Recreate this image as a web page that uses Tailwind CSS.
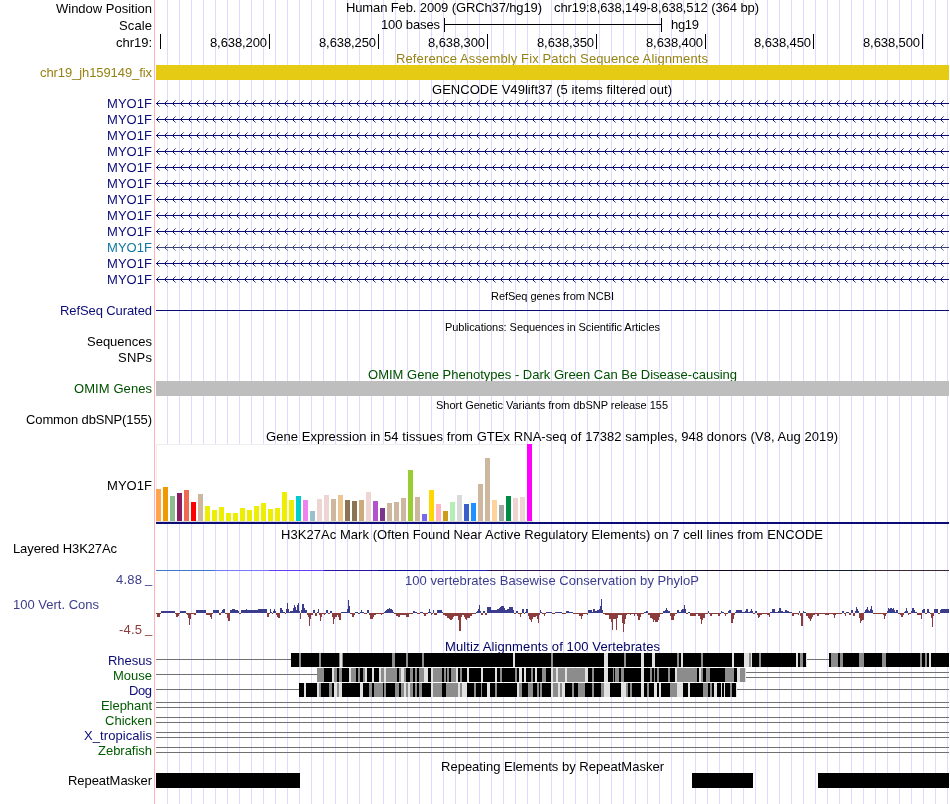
<!DOCTYPE html>
<html lang="en">
<head>
<meta charset="utf-8">
<title>Genome Browser chr19:8,638,149-8,638,512</title>
<script src="https://cdn.jsdelivr.net/npm/@tailwindcss/browser@4"></script>
</head>
<body class="bg-white">
<main class="relative w-[950px] h-[804px] overflow-hidden bg-white font-['Liberation_Sans',Arial,sans-serif]">
  <svg id="guides" class="absolute inset-0" width="950" height="804" shape-rendering="crispEdges" aria-hidden="true"></svg>
  <div id="tracks" class="relative flex flex-col will-change-transform antialiased"></div>
</main>
<script>
const NAVY = '#0c0c78', GREEN = '#005a00', CONS = '#3c3c8c', NEG = '#8c3c3c', LINE = '#707070';
const rect = (x, y, w, h, c) => `<rect x="${x}" y="${y}" width="${w}" height="${h}" fill="${c}"/>`;
// Text from x1 to x2 on baseline y
const text = (x1, x2, y, s, c = '#000', size = 13) =>
  `<text x="${x1}" y="${y}" textLength="${x2 - x1}" fill="${c}" font-size="${size}" xml:space="preserve">${s}</text>`;

let top_ = 0;
const out = [];
// A track row: the label cell and the data cell share page coordinates
function row(h, label, data) {
  out.push(`<section class="flex">
    <svg class="shrink-0 overflow-visible" width="155" height="${h}" viewBox="0 ${top_} 155 ${h}">${label}</svg>
    <svg class="shrink-0 overflow-visible" width="795" height="${h}" viewBox="155 ${top_} 795 ${h}">${data}</svg>
  </section>`);
  top_ += h;
}
const crisp = s => `<g shape-rendering="crispEdges">${s}</g>`;

// Guides
let g = rect(154, 0, 1, 804, '#ffb4b4');
for (let x = 167; x < 949; x += 12) g += rect(x, 0, 1, 804, '#dcdcff');
document.getElementById('guides').innerHTML = g;

// Header
row(17, text(56, 152, 13, 'Window Position'),
  text(346, 542, 12, 'Human Feb. 2009 (GRCh37/hg19)') + text(554, 759, 12, 'chr19:8,638,149-8,638,512 (364 bp)'));
row(16, text(119, 152, 30, 'Scale'),
  text(381, 440, 29, '100 bases') + crisp(rect(444, 24, 218, 1, '#000') + rect(444, 18, 1, 14, '#000') + rect(661, 18, 1, 14, '#000')) + text(671, 699, 29, 'hg19'));
const ticks = [[269, '200'], [378, '250'], [487, '300'], [596, '350'], [705, '400'], [813, '450'], [922, '500']];
row(18, text(116, 152, 47, 'chr19:'),
  crisp(rect(160, 34, 1, 15, '#000') + ticks.map(t => rect(t[0], 34, 1, 15, '#000')).join('')) +
  ticks.map(t => text(t[0] - 59, t[0] - 2, 47, '8,638,' + t[1])).join(''));

// Fix patch
row(14, '', text(396, 708, 63, 'Reference Assembly Fix Patch Sequence Alignments', '#968214'));
row(15, text(40, 152, 77, 'chr19_jh159149_fix', '#968214'), crisp(rect(156, 65, 793, 15, '#e6cb14')));

// GENCODE
row(16, '', text(432, 672, 94, 'GENCODE V49lift37 (5 items filtered out)'));
for (let i = 0; i < 12; i++) {
  const y = 103 + 16 * i, c = i === 9 ? '#1078a0' : NAVY, lc = i === 9 ? '#3c4678' : NAVY;
  const fade = ['', lc, lc + 'd0', lc + '80'];
  let s = rect(156, y, 793, 1, lc);
  for (let x = 156; x < 947; x += 8)
    for (let k = 1; k < 4; k++) s += rect(x + k, y - k, 1, 1, fade[k]) + rect(x + k, y + k, 1, 1, fade[k]);
  row(16, text(107, 152, y + 5, 'MYO1F', c), crisp(s));
}

// RefSeq, publications, OMIM, dbSNP
row(15, '', text(491, 614, 300, 'RefSeq genes from NCBI', '#000', 11));
row(16, text(60, 152, 315, 'RefSeq Curated', NAVY), crisp(rect(156, 310, 793, 1, NAVY)));
row(15, '', text(445, 660, 331, 'Publications: Sequences in Scientific Articles', '#000', 11));
row(16, text(87, 152, 346, 'Sequences'), '');
row(16, text(118, 152, 362, 'SNPs'), '');
row(15, '', text(368, 737, 379, 'OMIM Gene Phenotypes - Dark Green Can Be Disease-causing', '#005000'));
row(16, text(74, 152, 393, 'OMIM Genes', '#005000'), crisp(rect(156, 381, 793, 15, '#bebebe')));
row(15, '', text(436, 668, 409, 'Short Genetic Variants from dbSNP release 155', '#000', 11));
row(16, text(26, 152, 424, 'Common dbSNP(155)'), '');

// GTEx expression
row(16, '', text(266, 838, 441, 'Gene Expression in 54 tissues from GTEx RNA-seq of 17382 samples, 948 donors (V8, Aug 2019)'));
const heights = [32,34,25,28,31,19,27,15,11,14,8,8,13,11,15,18,12,13,29,21,25,21,10,22,26,22,26,21,20,21,29,20,13,18,19,23,51,24,7,31,17,10,19,26,17,18,37,63,21,16,25,23,24,77];
const colors = ('ffa54f ee9a00 8fbc8f 8b1c62 ee6a50 ff0000 cdb79e ' + 'eeee00 '.repeat(13) +
  '00cdcd ee82ee 9ac0cd eed5d2 eed5d2 cdb79e eec591 8b7355 8b7355 cdaa7d eed5d2 b452cd 7a378b cdb79e cdb79e cdb79e 9acd32 cdb79e 7a67ee ffd700 ffb6c1 cd9b1d b4eeb4 d9d9d9 3a5fcd 1e90ff cdb79e cdb79e ffd39b a6a6a6 008b45 eed5d2 eed5d2 ff00ff').split(' ');
row(82, text(107, 152, 490, 'MYO1F'), crisp(
  rect(156, 444, 377, 78, '#fff') + rect(156, 444, 377, 1, '#eeeeee') + rect(156, 444, 1, 78, '#eeeeee') + rect(156, 521, 377, 1, '#d8d8d8') +
  heights.map((h, i) => rect(156 + 7 * i, 521 - h, 5, h, '#' + colors[i])).join('') + rect(156, 522, 793, 2, NAVY)));

// H3K27Ac
row(16, '', text(281, 823, 539, 'H3K27Ac Mark (Often Found Near Active Regulatory Elements) on 7 cell lines from ENCODE'));
const marks = [[156,'#3c78c8'],[215,'#7878ff'],[269,'#643cf5'],[324,'#2814a0'],[378,'#0a0a96'],[433,'#2828b4'],[487,'#321450'],[651,'#140a32'],[705,'#14051e'],[814,'#0f1e28'],[868,'#3c2832'],[949,'']];
row(31, text(13, 117, 553, 'Layered H3K27Ac'),
  crisp(marks.slice(0, -1).map((m, i) => rect(m[0], 570, marks[i + 1][0] - m[0], 1, m[1])).join('')));

// PhyloP: each step is "start:height" in third-pixels from the origin and holds until the next start
const steps = [
 [150, '18:-1 21:-4 30:-1 33:2 75:-1 78:-4 84:-3 87:-1 90:2 108:-1 111:-2 114:-5 117:-12 120:-6 123:-1 132:-2 138:3 168:-2 180:-4 183:-6 186:-1 189:3 207:-2 213:1 216:3 219:4 225:-1 231:-5 234:-8 240:3 246:4 255:3 264:2 267:-1 272:3 288:4 291:3 324:4 351:-4 357:-1 360:4 363:1 366:-1 369:2 372:4 375:2 378:-2 381:-4 384:-5 390:5 396:3 399:1 405:-1 408:4 411:10 414:4 417:1 420:2 429:5 432:8 435:6 438:3 441:8 444:10 447:2 450:-6 453:3 456:9 462:5 465:3 471:-2 474:-4 477:-13 480:-6 483:-2 489:3 495:-3 501:1 504:4 507:-2 510:-8 513:-4 516:-1 522:-2 525:-1 528:3 534:-1 540:2 546:-4 549:-11 552:-6 555:-4 561:-2 564:-4 567:-7 573:1 591:4 594:13 597:7 600:-1 606:-4 612:-2 615:1 624:-1 630:1 633:3 636:1 642:-1 651:3 657:-2 660:-6 669:-4 672:-2 678:-1 693:-2 696:-1 702:1 705:2 708:3 711:4 717:5 720:4 726:3 729:1 732:-1 738:-3 744:-4 750:-2 768:-4 777:-1 789:2 795:1 801:-1 810:0'],
 [420, '0:1 9:-1 12:-3 18:-1 24:1 27:4 30:1 33:-2 36:-1 39:3 42:-2 51:3 66:1 69:-2 75:-3 81:-5 87:-6 90:-7 96:-6 99:-4 102:-3 114:-7 117:-18 123:-4 126:-2 132:-4 135:-6 138:-7 141:-5 150:-3 156:-1 168:1 171:2 174:4 177:8 180:2 183:-2 189:2 195:-2 201:6 213:3 231:4 237:5 240:6 243:7 252:5 255:3 261:4 267:6 279:3 282:-1 288:2 294:-1 300:-4 303:-1 306:4 312:-1 315:1 318:4 324:-3 327:-6 330:-7 333:-9 336:-6 339:-4 348:-3 351:-6 354:-10 357:-2 360:3 363:1 366:-1 372:-3 375:-1 378:1 396:-1 405:1 426:-1 438:2 447:1 459:-1 477:-3 483:-6 486:-3 489:-1 501:-2 504:3 516:1 519:4 525:2 531:3 537:4 540:7 543:14 546:3 549:-1 555:-2 567:-6 573:-9 576:-17 579:-6 588:-17 591:-5 594:-2 606:-10 609:-19 612:-11 615:-6 618:-2 621:-1 630:-2 633:-1 642:-3 645:-1 651:-3 654:-7 660:-4 663:-1 672:1 678:2 684:-2 690:-5 696:-6 699:-9 702:-7 705:-9 714:-7 717:-4 720:-1 729:2 735:3 738:5 741:3 744:2 750:-3 753:-7 762:-3 765:-1 771:3 777:1 783:3 786:4 792:8 795:4 798:-1 804:1 810:0'],
 [680, '30:-3 48:-1 54:-3 60:-6 63:-11 66:-7 69:-5 75:-1 84:2 87:-1 90:-3 96:-1 114:-3 120:-1 123:2 126:1 132:-1 135:-3 138:-1 144:2 147:3 153:-10 159:-6 162:-2 165:1 168:3 186:1 195:2 198:4 204:1 210:2 213:4 216:2 219:-1 225:2 231:-2 234:-5 237:-4 240:-2 246:-1 261:-2 267:-4 270:1 276:4 285:1 294:2 297:5 303:2 309:1 315:3 321:2 327:1 336:-3 342:-1 354:-2 357:2 360:-3 363:-13 369:2 372:1 378:-3 384:-5 387:-6 390:-8 393:-6 396:-4 399:-2 405:-1 411:-3 417:-1 435:-2 447:-1 459:-2 462:-5 465:-2 468:-1 486:2 492:-1 495:-3 498:1 507:-2 513:3 519:-3 525:2 528:6 531:4 534:2 537:-5 540:-10 543:-8 546:-7 552:1 555:3 558:4 561:6 564:3 567:2 570:4 573:7 576:3 579:-1 609:-2 612:-6 615:-3 618:-1 621:2 624:5 627:4 630:5 636:4 639:5 642:3 645:1 648:3 654:-1 660:-2 663:-4 669:-2 672:1 675:2 678:5 681:2 684:-2 687:-1 693:2 696:5 702:3 705:1 711:-2 723:-6 726:3 729:4 735:-1 741:4 747:1 750:-1 753:-5 756:-14 759:-3 762:4 774:-1 780:3 783:4 807:0']];
let cons = '';
for (const [x0, str] of steps) {
  const a = str.split(' ').map(p => p.split(':').map(Number));
  for (let i = 0; i < a.length - 1; i++) {
    const x = x0 + Math.round(a[i][0] / 3), w = x0 + Math.round(a[i + 1][0] / 3) - x, h = a[i][1];
    cons += h > 0 ? rect(x, 613 - h, w, h, CONS) : rect(x, 613, w, -h, NEG);
  }
}
row(16, text(116, 142, 584, '4.88', CONS) + text(145, 153, 583, '_', CONS), text(405, 699, 585, '100 vertebrates Basewise Conservation by PhyloP', CONS));
row(51, text(13, 99, 609, '100 Vert. Cons', CONS) + text(119, 142, 634, '-4.5', NEG) + text(145, 153, 633, '_', NEG), crisp(cons));

// Multiz: black base with grey (g), light (l) and black (k) spans, in third-pixels from the origin
const shade = { k: '#000', g: '#8c8c8c', l: '#e1e1e1' };
function spans(y, x0, str) {
  return str.split(' ').map(p => {
    const m = p.match(/(\d+)-(\d+)([gkl])/);
    return rect(x0 + m[1] / 3, y, (m[2] - m[1]) / 3, 14, shade[m[3]]);
  }).join('');
}
const hline = (y, x1 = 156, x2 = 949) => rect(x1, y, x2 - x1, 1, LINE);
row(16, '', text(445, 660, 651, 'Multiz Alignments of 100 Vertebrates', '#000064'));
row(15, text(108, 152, 665, 'Rhesus', NAVY), crisp(hline(659) + rect(291, 653, 515, 14, '#000') +
  spans(653, 280, '57-63g 117-123g 177-180g 180-186l 186-189g 336-345g 378-384g 426-432g') +
  spans(653, 510, '9-15l 123-129g 282-294l 342-348g 393-402l 426-435l 501-507g 513-519l 573-579g 666-672l') +
  spans(653, 730, '42-57l 57-63g 63-66l 87-93g 198-204l 210-219g 228-231l 297-657k 303-324g 330-339g 387-402g 456-468g 570-576g 585-591g 597-603l')));
row(15, text(113, 152, 680, 'Mouse', GREEN), crisp(hline(674, 156, 317) + hline(672, 746) + hline(677, 746) + rect(317, 668, 429, 14, '#000') +
  spans(668, 280, '111-132g 156-162l 162-171g 177-186g 207-213l 213-228g 234-240g 249-255g 255-261l 276-282l 297-303l 303-312g 312-318l 318-351g 357-363g 363-372l 372-378g 390-399g 405-411g 417-432g 432-444l 453-459l 459-486g 492-498g 501-507g 513-528g 528-534l 540-546g 561-567l 603-609l 645-651l 660-666g') +
  spans(668, 510, '15-21g 27-36l 42-48l 63-69g 75-81l 96-108g 123-129l 129-138g 138-144l 144-165g 165-171l 171-225g 225-234l 246-252g 282-294l 309-312g 315-327g 333-342g 393-402l 420-426g 432-435g 441-447g 474-480g 495-501l 501-561g 567-573l 573-579g 588-600g 645-672g 681-690l 690-705g 705-708l')));
row(15, text(129, 152, 695, 'Dog', NAVY), crisp(hline(689) + rect(299, 683, 438, 14, '#000') +
  spans(683, 280, '72-78l 111-117l 117-123g 147-156g 162-171l 171-177g 177-186l 240-249l 267-276g 282-309g 312-318g 345-357g 363-372g 372-378l 378-384g 384-390l 390-399g 405-411g 417-426g 453-459l 459-486g 498-534g 534-540l 540-546g 546-561l 582-588g 603-606g 621-630l 645-651g 711-717l') +
  spans(683, 510, '21-27l 27-36g 54-69g 81-87g 90-96g 123-129l 129-144g 144-150l 150-156g 156-165l 186-192g 204-225g 246-252g 273-282g 282-300l 333-348l 348-354g 360-366g 393-402l 411-417g 432-441l 447-453l 480-501g 501-519l 534-540l 579-594g 600-606g 612-621l 633-636l 642-645l 660-666g 678-681l')));
[['Elephant', 101, GREEN], ['Chicken', 105, GREEN], ['X_tropicalis', 84, NAVY], ['Zebrafish', 98, GREEN]].forEach(([n, x, c], i) =>
  row(15, text(x, 152, 710 + 15 * i, n, c), crisp(hline(702 + 15 * i) + hline(707 + 15 * i))));

// RepeatMasker
row(15, '', text(441, 664, 771, 'Repeating Elements by RepeatMasker'));
row(31, text(68, 152, 785, 'RepeatMasker'), crisp(rect(156, 773, 144, 15, '#000') + rect(692, 773, 61, 15, '#000') + rect(818, 773, 131, 15, '#000')));
document.getElementById('tracks').innerHTML = out.join('');
</script>
</body>
</html>
